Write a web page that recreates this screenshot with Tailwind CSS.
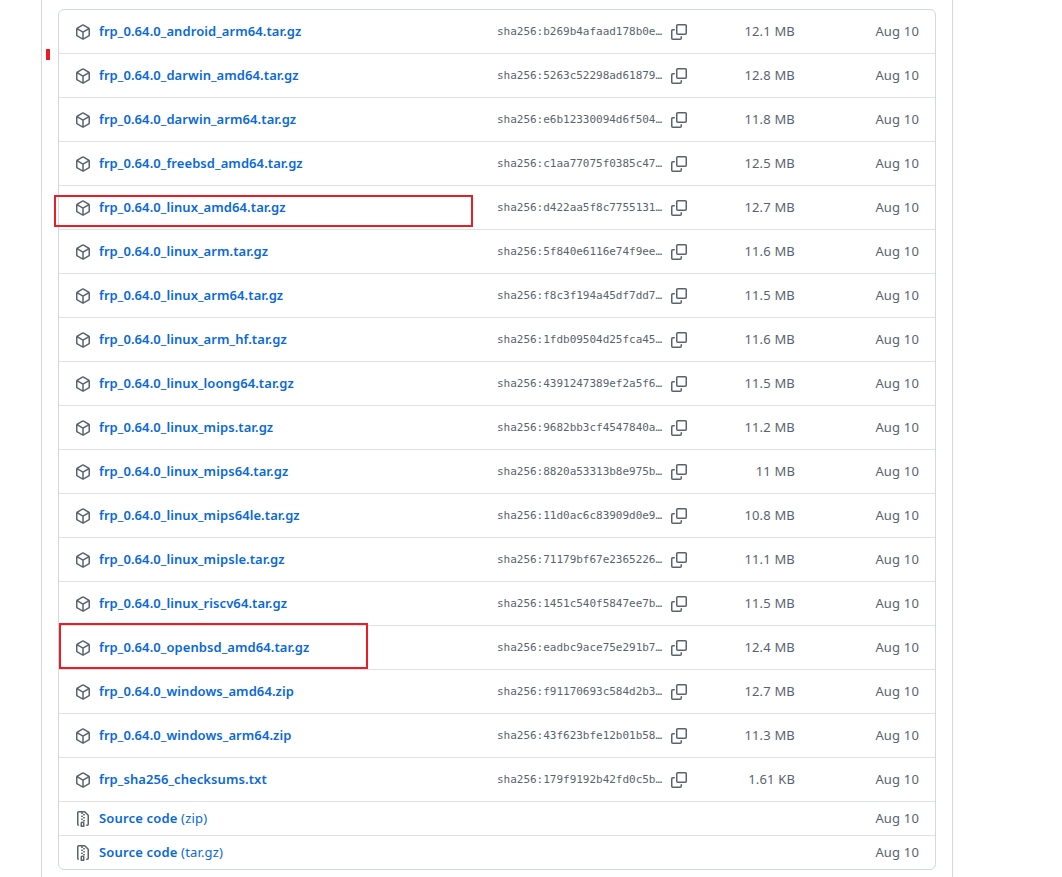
<!DOCTYPE html>
<html lang="en">
<head>
  <meta charset="UTF-8">
  <meta name="viewport" content="width=device-width, initial-scale=1.0">
  <title>Release assets</title>
  <script src="https://cdn.jsdelivr.net/npm/@tailwindcss/browser@4"></script>
</head>
<body class="relative h-[877px] overflow-hidden bg-white font-['Segoe_UI','Noto_Sans',sans-serif] text-[13px] tracking-[0.17px] text-[#59636e]">
  <!-- Icons -->
  <svg class="hidden">
    <symbol id="package" viewBox="0 0 16 16">
      <path d="m8.878.392 5.25 3.045c.54.314.872.89.872 1.514v6.098a1.75 1.75 0 0 1-.872 1.514l-5.25 3.045a1.75 1.75 0 0 1-1.756 0l-5.25-3.045A1.75 1.75 0 0 1 1 11.049V4.951c0-.624.332-1.201.872-1.514L7.122.392a1.75 1.75 0 0 1 1.756 0ZM7.875 1.69l-4.63 2.685L8 7.133l4.755-2.758-4.63-2.685a.248.248 0 0 0-.25 0ZM2.5 5.677v5.372c0 .09.047.171.125.216l4.625 2.683V8.432Zm6.25 8.271 4.625-2.683a.25.25 0 0 0 .125-.216V5.677L8.75 8.432Z"/>
    </symbol>
    <symbol id="file-zip" viewBox="0 0 16 16">
      <path d="M3.5 1.75v11.5c0 .09.048.173.126.217a.75.75 0 0 1-.752 1.298A1.748 1.748 0 0 1 2 13.25V1.75C2 .784 2.784 0 3.75 0h5.586c.464 0 .909.185 1.237.513l2.914 2.914c.329.328.513.773.513 1.237v8.586A1.75 1.75 0 0 1 12.25 15h-.5a.75.75 0 0 1 0-1.5h.5a.25.25 0 0 0 .25-.25V4.664a.25.25 0 0 0-.073-.177L9.513 1.573a.25.25 0 0 0-.177-.073H7.25a.75.75 0 0 1 0 1.5h-.5a.75.75 0 0 1 0-1.5h-3a.25.25 0 0 0-.25.25Zm3.75 8.75h.5c.966 0 1.75.784 1.75 1.75v3a.75.75 0 0 1-.75.75h-2.5a.75.75 0 0 1-.75-.75v-3c0-.966.784-1.75 1.75-1.75ZM6 5.25a.75.75 0 0 1 .75-.75h.5a.75.75 0 0 1 0 1.5h-.5A.75.75 0 0 1 6 5.25Zm.75 2.25h.5a.75.75 0 0 1 0 1.5h-.5a.75.75 0 0 1 0-1.5ZM8 6.75A.75.75 0 0 1 8.75 6h.5a.75.75 0 0 1 0 1.5h-.5A.75.75 0 0 1 8 6.75ZM8.75 3h.5a.75.75 0 0 1 0 1.5h-.5a.75.75 0 0 1 0-1.5ZM8 9.75A.75.75 0 0 1 8.75 9h.5a.75.75 0 0 1 0 1.5h-.5A.75.75 0 0 1 8 9.75Zm-1 2.5v2.25h1v-2.25a.25.25 0 0 0-.25-.25h-.5a.25.25 0 0 0-.25.25Z"/>
    </symbol>
    <symbol id="copy" viewBox="0 0 16 16">
      <path d="M0 6.75C0 5.784.784 5 1.75 5h1.5a.75.75 0 0 1 0 1.5h-1.5a.25.25 0 0 0-.25.25v7.5c0 .138.112.25.25.25h7.5a.25.25 0 0 0 .25-.25v-1.5a.75.75 0 0 1 1.5 0v1.5A1.75 1.75 0 0 1 9.25 16h-7.5A1.75 1.75 0 0 1 0 14.25Z"/>
      <path d="M5 1.75C5 .784 5.784 0 6.75 0h7.5C15.216 0 16 .784 16 1.75v7.5A1.75 1.75 0 0 1 14.25 11h-7.5A1.75 1.75 0 0 1 5 9.25Zm1.75-.25a.25.25 0 0 0-.25.25v7.5c0 .138.112.25.25.25h7.5a.25.25 0 0 0 .25-.25v-7.5a.25.25 0 0 0-.25-.25Z"/>
    </symbol>
  </svg>

  <div class="ml-[41px] h-full w-[912px] border-x border-[#d1d9e0] px-4 pt-[9px]">
    <ul id="assets" class="divide-y divide-[#dfe2e5] rounded-md border border-[#d1d9e0]"></ul>
  </div>

  <!-- Marks over the list -->
  <div class="absolute left-[46px] top-[49px] h-[11px] w-1 bg-[#ed1c24]"></div>
  <div class="absolute left-[54px] top-[195px] h-8 w-[419px] border-2 border-[#ed1c24]"></div>
  <div class="absolute left-[59px] top-[623px] h-[46px] w-[309px] border-2 border-[#ed1c24]"></div>

  <script>
    const assets = [
      ["frp_0.64.0_android_arm64.tar.gz", "b269b4afaad178b0e", "12.1 MB"],
      ["frp_0.64.0_darwin_amd64.tar.gz", "5263c52298ad61879", "12.8 MB"],
      ["frp_0.64.0_darwin_arm64.tar.gz", "e6b12330094d6f504", "11.8 MB"],
      ["frp_0.64.0_freebsd_amd64.tar.gz", "c1aa77075f0385c47", "12.5 MB"],
      ["frp_0.64.0_linux_amd64.tar.gz", "d422aa5f8c7755131", "12.7 MB"],
      ["frp_0.64.0_linux_arm.tar.gz", "5f840e6116e74f9ee", "11.6 MB"],
      ["frp_0.64.0_linux_arm64.tar.gz", "f8c3f194a45df7dd7", "11.5 MB"],
      ["frp_0.64.0_linux_arm_hf.tar.gz", "1fdb09504d25fca45", "11.6 MB"],
      ["frp_0.64.0_linux_loong64.tar.gz", "4391247389ef2a5f6", "11.5 MB"],
      ["frp_0.64.0_linux_mips.tar.gz", "9682bb3cf4547840a", "11.2 MB"],
      ["frp_0.64.0_linux_mips64.tar.gz", "8820a53313b8e975b", "11 MB"],
      ["frp_0.64.0_linux_mips64le.tar.gz", "11d0ac6c83909d0e9", "10.8 MB"],
      ["frp_0.64.0_linux_mipsle.tar.gz", "71179bf67e2365226", "11.1 MB"],
      ["frp_0.64.0_linux_riscv64.tar.gz", "1451c540f5847ee7b", "11.5 MB"],
      ["frp_0.64.0_openbsd_amd64.tar.gz", "eadbc9ace75e291b7", "12.4 MB"],
      ["frp_0.64.0_windows_amd64.zip", "f91170693c584d2b3", "12.7 MB"],
      ["frp_0.64.0_windows_arm64.zip", "43f623bfe12b01b58", "11.3 MB"],
      ["frp_sha256_checksums.txt", "179f9192b42fd0c5b", "1.61 KB"]
    ];

    const rows = assets.map(([name, sha, size]) => `
      <li class="flex h-11 items-center px-4">
        <svg class="mr-2 size-4 shrink-0 fill-current"><use href="#package"/></svg>
        <a href="#" class="w-[398px] whitespace-nowrap font-semibold tracking-[0.08px] text-[#0969da]"><span>${name}</span></a>
        <span class="w-[174px] whitespace-nowrap pt-px font-['DejaVu_Sans_Mono',monospace] text-[11px] tracking-[-0.02px]">sha256:${sha}…</span>
        <svg class="size-4 shrink-0 fill-current"><use href="#copy"/></svg>
        <span class="w-[108px] text-right">${size}</span>
        <span class="flex-1 text-right">Aug 10</span>
      </li>`);

    const sources = ["zip", "tar.gz"].map(type => `
      <li class="flex h-[34px] items-center px-4 last:h-[33px]">
        <svg class="mr-2 size-4 shrink-0 fill-current"><use href="#file-zip"/></svg>
        <a href="#" class="text-[#0969da]"><span class="font-semibold">Source code</span> <span>(${type})</span></a>
        <span class="flex-1 text-right">Aug 10</span>
      </li>`);

    document.getElementById("assets").innerHTML = rows.concat(sources).join("");
  </script>
</body>
</html>
